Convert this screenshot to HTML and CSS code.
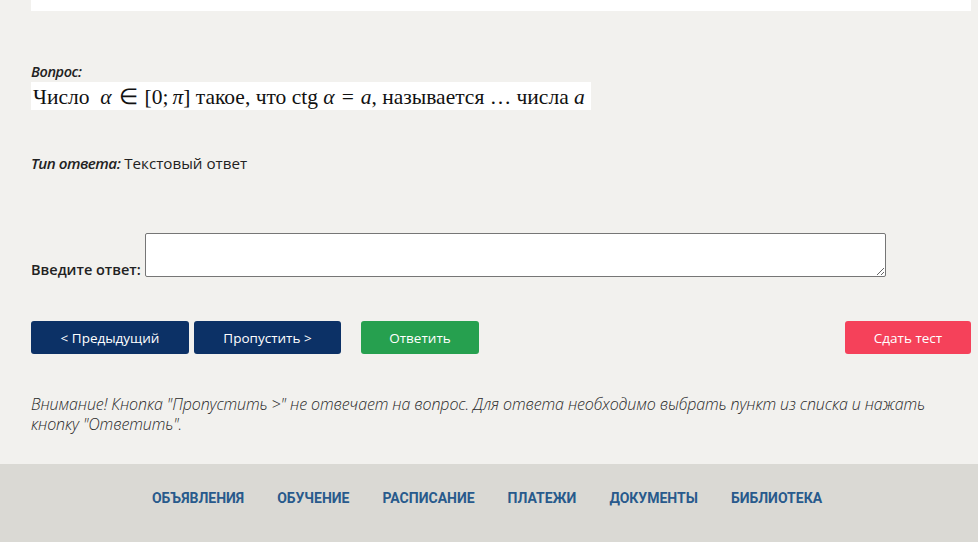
FILE: index.html
```html
<!DOCTYPE html>
<html lang="ru">

<head>
    <meta charset="UTF-8">
    <meta name="viewport" content="width=device-width, initial-scale=1.0">
    <title>Тест</title>

    <link rel="stylesheet" href="styles.css">
</head>

<body>
    <main class="content">
        <div class="top-box"></div>

        <div class="question">
            <p class="label">Вопрос:</p>
            <div class="question-text">Число&nbsp; <i>α</i><span class="op">∈</span>[0;<i class="sp">π</i>] такое, что ctg <i>α</i><span class="op">=</span><i>a</i>, называется … числа <i>a</i></div>
        </div>

        <p class="answer-type"><b>Тип ответа:</b> Текстовый ответ</p>

        <form class="answer-form" autocomplete="off">
            <label for="answer">Введите ответ:</label>
            <textarea name="answer" id="answer"></textarea>
        </form>

        <div class="buttons">
            <button class="btn btn-navy btn-prev">&lt; Предыдущий</button>
            <button class="btn btn-navy btn-skip">Пропустить &gt;</button>
            <button class="btn btn-green">Ответить</button>
            <button class="btn btn-red">Сдать тест</button>
        </div>

        <p class="notice">
            Внимание! Кнопка "Пропустить &gt;" не отвечает на вопрос. Для ответа необходимо выбрать пункт из списка и нажать кнопку "Ответить".
        </p>
    </main>

    <footer>
        <ul class="nav">
            <li><a href="#">Объявления</a></li>
            <li><a href="#">Обучение</a></li>
            <li><a href="#">Расписание</a></li>
            <li><a href="#">Платежи</a></li>
            <li><a href="#">Документы</a></li>
            <li><a href="#">Библиотека</a></li>
        </ul>
    </footer>
</body>

</html>
```

FILE: styles.css
```css
* {
    margin: 0;
    padding: 0;
    box-sizing: border-box;
}

body {
    background-color: #f2f1ee;
    color: #222;
    font-family: "Open Sans", sans-serif;
    font-size: 14px;
}

ul {
    list-style: none;
}

.content {
    height: 464px;
    padding: 0 7px 0 31px;
}

.top-box {
    height: 11px;
    background-color: #fff;
}

.question {
    margin-top: 51px;
}

.label {
    font-style: italic;
    font-weight: 600;
    font-size: 14.5px;
    line-height: 19px;
    letter-spacing: -0.4px;
}

.question-text {
    width: fit-content;
    background-color: #fff;
    margin-top: 1px;
    padding: 1px 6px 0 2px;
    height: 28px;
    line-height: 28px;
    font-family: "Liberation Serif", serif;
    font-size: 21.5px;
    color: #111;
    white-space: nowrap;
}

.question-text i {
    font-style: italic;
}

.question-text .op {
    padding: 0 7px;
}

.question-text .sp {
    padding-left: 4px;
}

.answer-type {
    margin-top: 43px;
    line-height: 20px;
    font-size: 15.2px;
}

.answer-type b {
    font-style: italic;
    font-weight: 600;
    letter-spacing: -0.5px;
}

.answer-form {
    display: flex;
    align-items: flex-end;
    gap: 4px;
    margin-top: 60px;
}

.answer-form label {
    font-weight: 600;
    font-size: 14.5px;
    line-height: 19px;
    margin-bottom: -2px;
}

textarea {
    width: 741px;
    height: 44px;
    border: 1px solid #767676;
    border-radius: 2px;
    background-color: #fff;
    outline: none;
}

.buttons {
    display: flex;
    margin-top: 44px;
    gap: 5px;
}

.btn {
    height: 33px;
    border: none;
    border-radius: 3px;
    color: #fff;
    font-family: "Open Sans", sans-serif;
    font-size: 13.5px;
    cursor: pointer;
}

.btn-navy {
    background-color: #0c3166;
}

.btn-prev {
    width: 158px;
}

.btn-skip {
    width: 147px;
}

.btn-green {
    width: 118px;
    margin-left: 15px;
    background-color: #26a04f;
}

.btn-red {
    width: 126px;
    margin-left: auto;
    background-color: #f5415a;
}

.notice {
    margin-top: 40px;
    padding-right: 20px;
    font-style: italic;
    font-weight: 300;
    font-size: 16px;
    line-height: 20px;
    letter-spacing: -0.1px;
    color: #2a2a2a;
}

footer {
    height: 78px;
    background-color: #dad9d4;
    display: flex;
    justify-content: center;
    align-items: flex-start;
    padding-top: 24px;
}

.nav {
    display: flex;
    gap: 33px;
    margin-left: -4px;
}

.nav a {
    text-decoration: none;
    text-transform: uppercase;
    color: #285a8c;
    font-family: "Liberation Sans Narrow", "Roboto", sans-serif;
    font-weight: 700;
    font-size: 14px;
}
```
